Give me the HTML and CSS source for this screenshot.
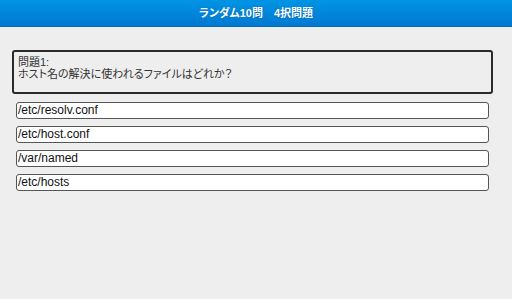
FILE: index.html
```html
<!DOCTYPE html>
<html lang="ja">
<head>
<meta charset="utf-8">
<link rel="stylesheet" href="styles.css">
</head>
<body>
<header class="bar">ランダム10問　4択問題</header>
<main class="content">
  <div class="question">問題1:<br>ホスト名の解決に使われるファイルはどれか？</div>
  <div class="choices">
    <div class="choice">/etc/resolv.conf</div>
    <div class="choice">/etc/host.conf</div>
    <div class="choice">/var/named</div>
    <div class="choice">/etc/hosts</div>
  </div>
</main>
</body>
</html>
```
FILE: styles.css
```css
html, body {
  margin: 0;
  padding: 0;
  background: #eeeeee;
  height: 100%;
}
body {
  font-family: "Liberation Sans", "Noto Sans CJK JP", sans-serif;
  color: #222;
}
.bar {
  height: 26px;
  line-height: 26px;
  background: linear-gradient(#0094e4, #0078d2);
  border-bottom: 1px solid #0a6cb8;
  color: #fff;
  font-weight: bold;
  font-size: 11px;
  text-align: center;
  font-feature-settings: "palt";
  text-shadow: 0 0 1px rgba(0,0,0,0.3);
}
.content {
  padding: 23px 19px 0 12px;
}
.question {
  border: 2px solid #2a2a2a;
  border-radius: 3px;
  height: 36px;
  padding: 4px 4px 0;
  font-size: 11px;
  line-height: 12px;
  color: #333;
  font-feature-settings: "palt";
}
.choices {
  display: flex;
  flex-direction: column;
  gap: 7px;
  margin: 8px 4px 0 4px;
}
.choice {
  background: #fff;
  border: 1px solid #555;
  border-radius: 3px;
  height: 15px;
  line-height: 15px;
  padding: 0 1px;
  font-size: 12px;
  color: #111;
}
```
